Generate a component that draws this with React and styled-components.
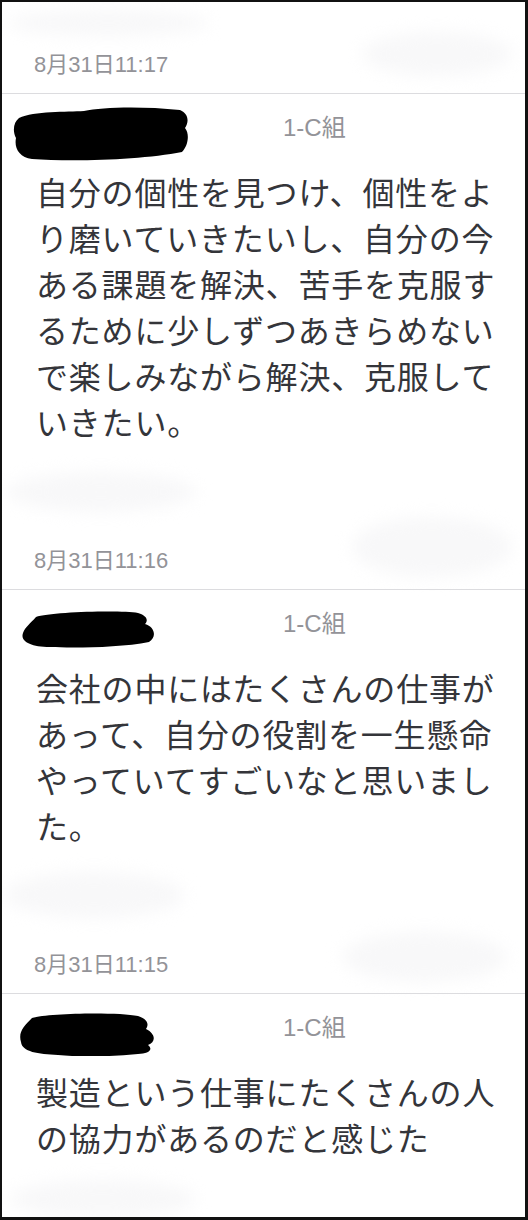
import React from 'react'
import styled, { createGlobalStyle } from 'styled-components'

const GlobalStyle = createGlobalStyle`
    html, body {
        margin: 0;
        padding: 0;
        background: #fff;
    }
    body {
        font-family: "Noto Sans CJK JP", "Liberation Sans", sans-serif;
    }
`

const posts = [
    {
        id: 1,
        blob: 'big',
        text: '自分の個性を見つけ、個性をよ\nり磨いていきたいし、自分の今\nある課題を解決、苦手を克服す\nるために少しずつあきらめない\nで楽しみながら解決、克服して\nいきたい。',
        stamp: '8月31日11:16',
    },
    {
        id: 2,
        blob: 'small',
        text: '会社の中にはたくさんの仕事が\nあって、自分の役割を一生懸命\nやっていてすごいなと思いまし\nた。',
        stamp: '8月31日11:15',
    },
    {
        id: 3,
        blob: 'third',
        text: '製造という仕事にたくさんの人\nの協力があるのだと感じた',
        stamp: null,
    },
]

const blobs = {
    big: {
        w: 176, h: 56, left: 10, top: 6,
        d: 'M7 12 C22 5 55 6 72 5 C90 1 130 0 168 4 C177 8 177 16 173 22 C178 28 176 40 170 46 C130 54 60 56 20 53 C7 51 2 42 4 32 C0 24 2 16 7 12 Z',
    },
    small: {
        w: 136, h: 38, left: 18, top: 4,
        d: 'M16 7 C30 2 100 0 118 3 C128 6 128 11 125 14 C135 17 137 27 129 32 C100 38 50 38 30 37 C10 37 0 31 3 23 C5 17 10 14 16 7 Z',
    },
    third: {
        w: 138, h: 44, left: 16, top: 6,
        d: 'M14 6 C30 1 100 0 120 4 C132 8 130 14 128 17 C138 22 138 30 130 33 C136 38 130 42 120 42 C90 45 60 45 40 43 C20 42 4 40 3 30 C0 20 6 14 14 6 Z',
    },
}

const smudges = [
    { x: 6, y: 8, w: 200, h: 26 },
    { x: 360, y: 30, w: 150, h: 44 },
    { x: 4, y: 470, w: 190, h: 40 },
    { x: 350, y: 515, w: 160, h: 60 },
    { x: 2, y: 870, w: 180, h: 46 },
    { x: 340, y: 930, w: 165, h: 50 },
    { x: 8, y: 1178, w: 185, h: 38 },
]

const NameBlob = ({ kind }) => {
    const b = blobs[kind]
    return (
        <BlobSvg width={b.w} height={b.h} viewBox={`0 0 ${b.w} ${b.h}`} $left={b.left} $top={b.top}>
            <path d={b.d} fill="#000" />
        </BlobSvg>
    )
}

const App = () => {
    return (
        <>
            <GlobalStyle />
            <Frame>
                {smudges.map((s, i) => (
                    <Smudge key={i} style={{ left: s.x, top: s.y, width: s.w, height: s.h }} />
                ))}
                <TopStamp>
                    <Stamp>8月31日11:17</Stamp>
                </TopStamp>
                {posts.map(post => (
                    <Post key={post.id}>
                        <Header>
                            <NameCell>
                                <NameBlob kind={post.blob} />
                            </NameCell>
                            <ClassName>1-C組</ClassName>
                        </Header>
                        <Body>{post.text}</Body>
                        {post.stamp && (
                            <PostFooter>
                                <Stamp>{post.stamp}</Stamp>
                            </PostFooter>
                        )}
                    </Post>
                ))}
            </Frame>
        </>
    )
}

export default App

const Frame = styled.div`
    position: relative;
    box-sizing: border-box;
    width: 528px;
    height: 1220px;
    overflow: hidden;
    border: 2px solid #111;
    border-right-width: 3px;
    border-bottom-width: 3px;
    background: #fff;
    display: flex;
    flex-direction: column;
`
const Smudge = styled.div`
    position: absolute;
    border-radius: 50%;
    background: #f8f8f9;
    filter: blur(8px);
    pointer-events: none;
`
const TopStamp = styled.div`
    padding: 48px 0 13px 32px;
    position: relative;
`
const Stamp = styled.div`
    font-family: "Liberation Sans", "Noto Sans CJK JP", sans-serif;
    font-size: 22px;
    line-height: 30px;
    color: #939398;
`
const Post = styled.div`
    position: relative;
    border-top: 1px solid #dcdcdf;
`
const Header = styled.div`
    display: grid;
    grid-template-columns: 281px 1fr;
    align-items: center;
    height: 74px;
`
const NameCell = styled.div`
    display: flex;
    align-items: center;
    height: 100%;
`
const BlobSvg = styled.svg`
    display: block;
    margin-left: ${p => p.$left}px;
    margin-top: ${p => p.$top}px;
`
const ClassName = styled.div`
    font-family: "Liberation Sans", "Noto Sans CJK JP", sans-serif;
    font-size: 24px;
    line-height: 30px;
    color: #939398;
    margin-top: -6px;
`
const Body = styled.div`
    padding-left: 34px;
    font-size: 32px;
    line-height: 46px;
    letter-spacing: 0.8px;
    color: #34353a;
    white-space: pre-line;
`
const PostFooter = styled.div`
    padding: 102px 0 13px 32px;
`
